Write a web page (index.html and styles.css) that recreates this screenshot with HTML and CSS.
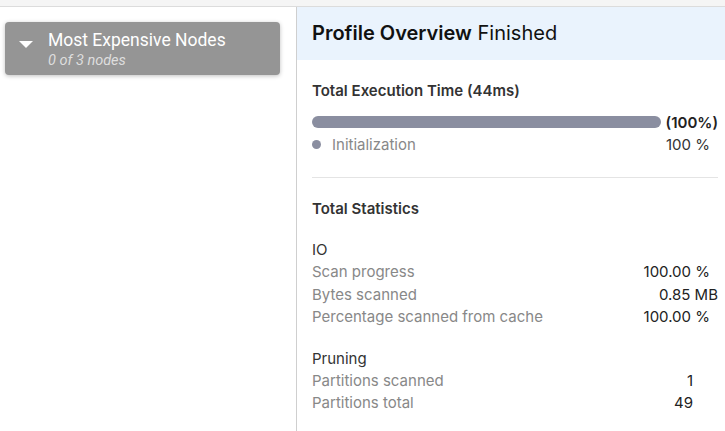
FILE: index.html
```html
<!DOCTYPE html>
<html>
<head>
<meta charset="utf-8">
<link rel="stylesheet" href="styles.css">
</head>
<body>
<div class="topstrip"></div>
<div class="main">
  <aside class="left">
    <div class="card">
      <svg class="caret" width="14" height="8" viewBox="0 0 14 8"><path d="M0 0 L14 0 L7 7 Z" fill="#fff"/></svg>
      <div class="card-text">
        <div class="card-title">Most Expensive Nodes</div>
        <div class="card-sub">0 of 3 nodes</div>
      </div>
    </div>
  </aside>
  <section class="right">
    <header class="head"><b>Profile Overview</b> Finished</header>
    <div class="body">
      <div class="sec-title">Total Execution Time (44ms)</div>
      <div class="barrow">
        <div class="bar"></div>
        <span class="pct">(100%)</span>
      </div>
      <div class="legend">
        <span class="dot"></span>
        <span class="lname">Initialization</span>
        <span class="lval">100 %</span>
      </div>
      <hr class="sep">
      <div class="sec-title stats">Total Statistics</div>
      <div class="group">IO</div>
      <div class="row"><span class="k">Scan progress</span><span class="v pc">100.00 %</span></div>
      <div class="row"><span class="k">Bytes scanned</span><span class="v">0.85 MB</span></div>
      <div class="row"><span class="k">Percentage scanned from cache</span><span class="v pc">100.00 %</span></div>
      <div class="group g2">Pruning</div>
      <div class="row"><span class="k">Partitions scanned</span><span class="v num">1</span></div>
      <div class="row"><span class="k">Partitions total</span><span class="v num">49</span></div>
    </div>
  </section>
</div>
</body>
</html>
```
FILE: styles.css
```css
html, body { margin: 0; padding: 0; }
body {
  width: 725px; height: 431px; overflow: hidden;
  font-family: Inter, "Noto Sans", sans-serif;
  background: #fff;
}
.topstrip {
  height: 6px; background: #f5f5f5; border-bottom: 1px solid #dcdcdc;
}
.main { display: flex; height: 424px; }
.left { width: 296px; flex: none; padding: 15px 0 0 5px; box-sizing: border-box; }
.card {
  width: 275px; height: 53px; box-sizing: border-box;
  background: #959595; border-radius: 4px;
  box-shadow: 0 1px 4px rgba(0,0,0,0.25);
  display: flex; align-items: flex-start; padding: 8px 0 0 14px;
  font-family: Roboto, sans-serif;
}
.caret { margin-top: 11px; margin-right: 15px; }
.card-title { color: #fff; font-size: 17.5px; line-height: 20px; }
.card-sub { color: #dedede; font-size: 14.5px; font-style: italic; line-height: 18px; margin-top: 2px; }
.right { flex: 1; border-left: 1px solid #cfcfcf; }
.head {
  background: #eaf3fd; height: 53px; box-sizing: border-box;
  padding: 13px 0 0 15px; font-size: 20px; color: #111; line-height: 26px;
}
.head b { font-weight: 600; }
.body { padding: 22px 7px 0 15px; }
.sec-title { font-weight: 600; font-size: 15px; color: #333; line-height: 18px; }
.barrow { display: flex; align-items: center; margin-top: 15px; height: 14px; }
.bar { width: 349px; height: 12px; border-radius: 6px; background: #8a8ea0; }
.pct { margin-left: auto; font-size: 15px; font-weight: 600; color: #222; }
.legend { display: flex; align-items: center; margin-top: 5px; font-size: 15px; height: 20px; }
.dot { width: 9px; height: 9px; border-radius: 50%; background: #8a8ea0; margin-right: 11px; }
.lname { color: #888; flex: 1; }
.lval { color: #333; margin-right: 8px; }
.sep { border: 0; border-top: 1px solid #e4e4e4; margin: 23px 0 0 0; }
.stats { margin-top: 22px; }
.group { margin-top: 21px; font-size: 15px; color: #333; line-height: 22px; }
.g2 { margin-top: 19px; }
.row {
  display: flex; justify-content: space-between;
  font-size: 15px; line-height: 22.5px;
}
.k { color: #888; }
.v { color: #222; }
.pc { margin-right: 8px; }
.num { margin-right: 25px; }
```
